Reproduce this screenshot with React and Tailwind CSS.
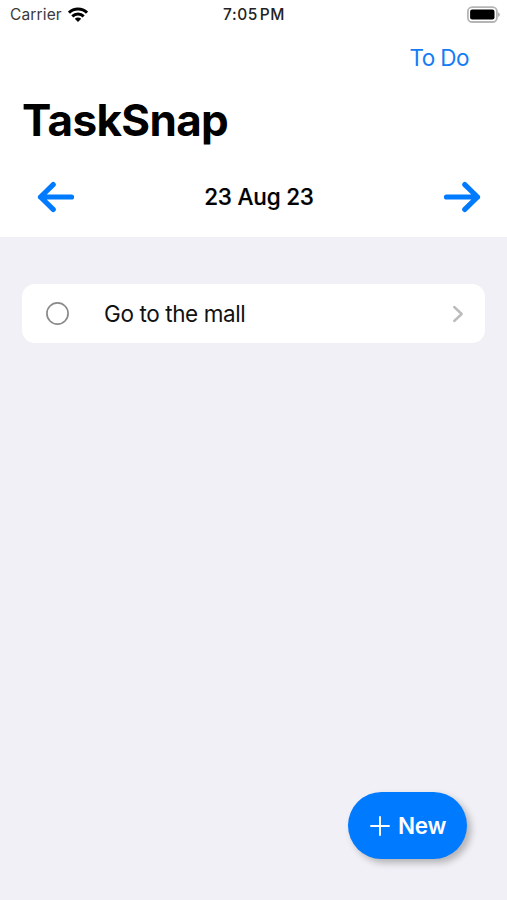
function StatusBar() {
  return (
    <div className="grid h-[30px] grid-cols-3 items-center pl-[10px] pr-[7px]">
      <div className="flex items-center gap-[6px] text-[15.5px] leading-[30px] tracking-[0.15px] text-[#3a3a3a]">
        <span>Carrier</span>
        <svg className="mb-[2px]" width="20" height="15" viewBox="0 0 20 15" fill="none" stroke="#000" strokeWidth="3">
          <path d="M1 5.7a13 13 0 0 1 18 0" />
          <path d="M4.3 9.3a8.3 8.3 0 0 1 11.4 0" />
          <path d="M10 15 6.8 11.8a4.6 4.6 0 0 1 6.4 0Z" fill="#000" stroke="none" />
        </svg>
      </div>
      <div className="-ml-[2px] text-center text-[15.5px] font-medium leading-[30px] tracking-[0.55px] text-[#222]">7:05&#8202;PM</div>
      <svg className="mb-[2px] justify-self-end" width="33" height="17" viewBox="0 0 33 17">
        <rect x="0.9" y="1.2" width="29" height="14.8" rx="4.3" fill="#fff" stroke="#b5b5b5" strokeWidth="1.8" />
        <rect x="3.1" y="3.6" width="24.4" height="10" rx="2.1" fill="#000" />
        <path d="M31.2 6.3q1.6.7 1.6 2.3t-1.6 2.3Z" fill="#a9a9a9" />
      </svg>
    </div>
  );
}

function Arrow({ className }) {
  return (
    <svg className={className} width="38" height="32" viewBox="0 0 38 32" fill="none" stroke="#007aff" strokeWidth="5.2" strokeLinecap="round" strokeLinejoin="round">
      <path d="M34.5 16H3.5M16.2 3.6 3.5 16l12.7 12.4" />
    </svg>
  );
}

export default function App() {
  return (
    <div className="flex h-[900px] w-[507px] flex-col bg-[#f1f0f6] font-['Inter','Liberation_Sans',sans-serif] text-black">
      <header className="flex h-[237px] flex-col bg-white">
        <StatusBar />
        <button className="mr-[38px] mt-[13px] h-[30px] self-end text-[22.5px] leading-[30px] tracking-[-0.55px] text-[#147cf5]">To Do</button>
        <h1 className="ml-[22px] mt-[20px] h-[54px] self-start text-[44px] font-bold leading-[54px] tracking-[-0.65px]">TaskSnap</h1>
        <div className="mt-[34px] flex h-[32px] items-center justify-between pl-[37px] pr-[26px]">
          <Arrow />
          <span className="text-[22.5px] font-medium leading-[32px] tracking-[-0.2px] [-webkit-text-stroke:0.2px_black]">23 Aug 23</span>
          <Arrow className="rotate-180" />
        </div>
      </header>
      <main className="flex flex-1 flex-col px-[22px] pt-[47px]">
        <div className="flex h-[59px] items-center rounded-[13px] bg-white pl-[24px] pr-[21px]">
          <svg width="23" height="23" viewBox="0 0 23 23" fill="none" stroke="#8a8a8a" strokeWidth="1.7">
            <circle cx="11.5" cy="11.5" r="10.6" />
          </svg>
          <span className="ml-[35px] flex-1 text-[22.5px] leading-[30px] tracking-[-0.4px] text-[#111]">Go to the mall</span>
          <svg width="12" height="18" viewBox="0 0 12 18" fill="none" stroke="#bcbcbe" strokeWidth="2.4" strokeLinecap="round" strokeLinejoin="round">
            <path d="m2.2 2 7.5 7-7.5 7" />
          </svg>
        </div>
        <button className="mb-[41px] mr-[18px] mt-auto flex h-[67px] w-[119px] items-center self-end rounded-[33.5px] bg-[#007aff] pl-[22px] text-white shadow-[4px_4px_7px_rgba(0,0,0,0.26)]">
          <svg width="20" height="20" viewBox="0 0 20 20" stroke="#fff" strokeWidth="1.9" strokeLinecap="round">
            <path d="M10 1v18M1 10h18" />
          </svg>
          <span className="ml-[8px] text-[22.5px] font-semibold leading-[30px] tracking-[-0.3px]">New</span>
        </button>
      </main>
    </div>
  );
}
